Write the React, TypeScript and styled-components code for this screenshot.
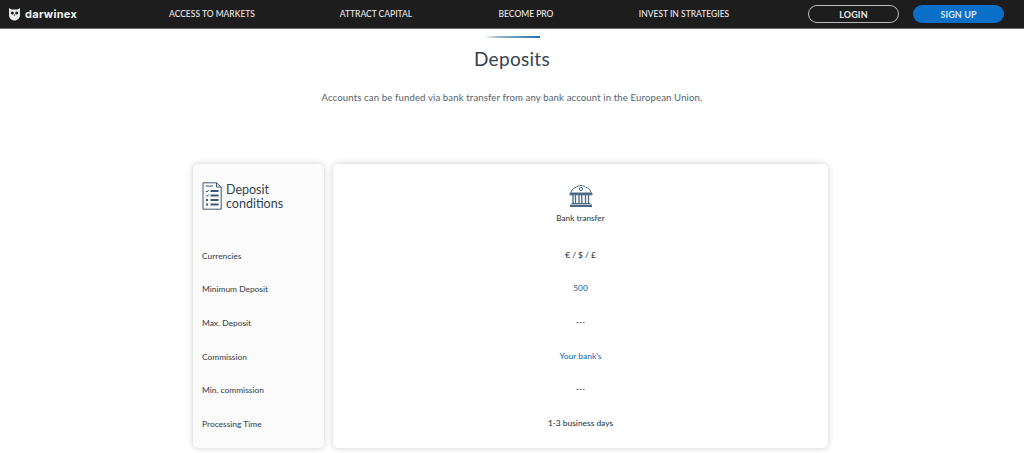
import React from 'react';
import styled, { createGlobalStyle } from 'styled-components';

const Global = createGlobalStyle`
  html, body { margin: 0; padding: 0; background: #fff; overflow: hidden; }
  body { font-family: "Lato", "Liberation Sans", sans-serif; color: #2b3a47; }
`;

const Page = styled.div`
  width: 1024px;
  height: 453px;
  overflow: hidden;
  background: #fff;
`;

const Header = styled.header`
  height: 28px;
  background: #1d1d1d;
  border-bottom: 1px solid #6e6e6e;
  display: flex;
  align-items: center;
  padding: 0 20px 0 8px;
  box-sizing: content-box;
`;

const Logo = styled.div`
  display: flex;
  align-items: center;
  gap: 4px;
  width: 122px;
  color: #f2f2f2;
  font-family: "Inter", "Liberation Sans", sans-serif;
  font-weight: 700;
  font-size: 11px;
  letter-spacing: 0.3px;
`;

const Nav = styled.nav`
  display: flex;
  align-items: center;
  width: 660px;
`;

const NavLink = styled.a<{ $w: number }>`
  width: ${p => p.$w}px;
  text-align: center;
  color: #e9e9e9;
  font-size: 8.5px;
  font-weight: 500;
  white-space: nowrap;
`;

const Actions = styled.div`
  display: flex;
  align-items: center;
  gap: 14px;
  margin-left: auto;
`;

const Pill = styled.button<{ $primary?: boolean }>`
  width: 91px;
  height: 18px;
  padding: 0;
  border-radius: 9px;
  box-sizing: border-box;
  border: ${p => (p.$primary ? '0' : '1px solid #b9b9b9')};
  background: ${p => (p.$primary ? '#0a6fc9' : 'transparent')};
  color: ${p => (p.$primary ? '#d9e8f5' : '#e9e9e9')};
  font-family: inherit;
  font-size: 9px;
  font-weight: 700;
  letter-spacing: 0.1px;
`;

const Intro = styled.section`
  display: flex;
  flex-direction: column;
  align-items: center;
  padding-top: 7px;
`;

const Accent = styled.div`
  width: 56px;
  height: 2px;
  background: linear-gradient(90deg, rgba(255,255,255,0) 0%, #9db4c9 25%, #1f6fb5 100%);
`;

const Title = styled.h1`
  margin: 9px 0 0;
  font-size: 19px;
  line-height: 24px;
  font-weight: 400;
  color: #33424f;
  letter-spacing: 0.3px;
`;

const Subtitle = styled.p`
  margin: 20px 0 0;
  font-size: 9.6px;
  line-height: 14px;
  color: #56616b;
  letter-spacing: 0.12px;
`;

const Cards = styled.div`
  display: flex;
  gap: 9px;
  margin: 59px 0 0 193px;
`;

const Card = styled.div`
  height: 284px;
  box-sizing: border-box;
  border-radius: 5px;
  box-shadow: 0 0 6px rgba(0, 0, 0, 0.2);
`;

const Labels = styled(Card)`
  width: 131px;
  background: #fbfbfb;
  padding: 18px 0 0 9px;
`;

const Values = styled(Card)`
  width: 495px;
  background: #fff;
  padding-top: 20px;
  display: flex;
  flex-direction: column;
  align-items: center;
`;

const Heading = styled.div`
  display: flex;
  gap: 4px;
  height: 57px;
`;

const HeadingText = styled.div`
  font-size: 12.5px;
  line-height: 14px;
  color: #33424f;
  padding-top: 1px;
`;

const Method = styled.div`
  font-size: 8.2px;
  line-height: 12px;
  font-weight: 500;
  color: #33424f;
  margin-top: 4px;
  height: 16px;
`;

const Rows = styled.div`
  display: flex;
  flex-direction: column;
`;

const Row = styled.div`
  height: 33.6px;
  display: flex;
  align-items: center;
  font-size: 8.4px;
  color: #3c4a56;
  font-weight: 500;
`;

const ValueList = styled(Rows)`
  margin-top: 10px;
  align-items: center;
`;

const Value = styled(Row)<{ $accent?: boolean }>`
  color: ${p => (p.$accent ? '#1f6fb5' : '#2b3a47')};
`;

const Owl = () => (
  <svg width="13" height="14" viewBox="0 0 13 14" fill="#ececec">
    <path d="M1 1 L3.5 2.5 H9.5 L12 1 V8 C12 11 9.5 13.5 6.5 13.5 C3.5 13.5 1 11 1 8 Z" />
    <circle cx="4.3" cy="6" r="1.5" fill="#1d1d1d" />
    <circle cx="8.7" cy="6" r="1.5" fill="#1d1d1d" />
    <path d="M6.5 7 L7.4 8.6 H5.6 Z" fill="#1d1d1d" />
  </svg>
);

const ListIcon = () => (
  <svg width="20" height="28" viewBox="0 0 20 28" fill="none" stroke="#3d5a78" strokeWidth="1">
    <path d="M1 .8 H14.5 L19.2 5 V27.2 H1 Z" />
    <path d="M14.5 .8 V5 H19.2" />
    <path d="M3.5 4 H11" />
    <path d="M4 9 l1 1 1.6 -2" />
    <path d="M8.5 9 H16.5" strokeWidth="2" />
    <path d="M4 13.5 l1 1 1.6 -2" />
    <path d="M8.5 13.5 H16.5" strokeWidth="2" />
    <path d="M4 18 h2" strokeWidth="2" />
    <path d="M8.5 18 H16.5" strokeWidth="2" />
    <path d="M4 22.5 h2" strokeWidth="2" />
    <path d="M8.5 22.5 H16.5" strokeWidth="2" />
  </svg>
);

const BankIcon = () => (
  <svg width="24" height="24" viewBox="0 0 24 24" fill="none" stroke="#4a6784" strokeWidth="1">
    <path d="M2 8.5 C3 5 5 3.5 7 3.5 C8.5 1 15.5 1 17 3.5 C19 3.5 21 5 22 8.5" />
    <circle cx="12" cy="5" r="1.6" />
    <path d="M1 9 H23 V10.8 H1 Z" fill="#4a6784" />
    <path d="M4 11 V19 M6.5 11 V19 M10 11 V19 M12.8 11 V19 M16.5 11 V19 M19.5 11 V19" strokeWidth="1.3" />
    <path d="M2.5 19.5 H21.5" strokeWidth="1" />
    <path d="M1 21.8 H23" strokeWidth="2.4" />
  </svg>
);

const rows: [string, string, boolean][] = [
  ['Currencies', '€ / $ / £', false],
  ['Minimum Deposit', '500', true],
  ['Max. Deposit', '---', false],
  ['Commission', "Your bank's", true],
  ['Min. commission', '---', false],
  ['Processing Time', '1-3 business days', false],
];

export default function App() {
  return (
    <Page>
      <Global />
      <Header>
        <Logo><Owl />darwinex</Logo>
        <Nav>
          <NavLink $w={164}>ACCESS TO MARKETS</NavLink>
          <NavLink $w={164}>ATTRACT CAPITAL</NavLink>
          <NavLink $w={136}>BECOME PRO</NavLink>
          <NavLink $w={180}>INVEST IN STRATEGIES</NavLink>
        </Nav>
        <Actions>
          <Pill>LOGIN</Pill>
          <Pill $primary>SIGN UP</Pill>
        </Actions>
      </Header>
      <Intro>
        <Accent />
        <Title>Deposits</Title>
        <Subtitle>Accounts can be funded via bank transfer from any bank account in the European Union.</Subtitle>
      </Intro>
      <Cards>
        <Labels>
          <Heading>
            <ListIcon />
            <HeadingText>Deposit<br />conditions</HeadingText>
          </Heading>
          <Rows>
            {rows.map(r => <Row key={r[0]}>{r[0]}</Row>)}
          </Rows>
        </Labels>
        <Values>
          <BankIcon />
          <Method>Bank transfer</Method>
          <ValueList>
            {rows.map(r => <Value key={r[0]} $accent={r[2]}>{r[1]}</Value>)}
          </ValueList>
        </Values>
      </Cards>
    </Page>
  );
}
